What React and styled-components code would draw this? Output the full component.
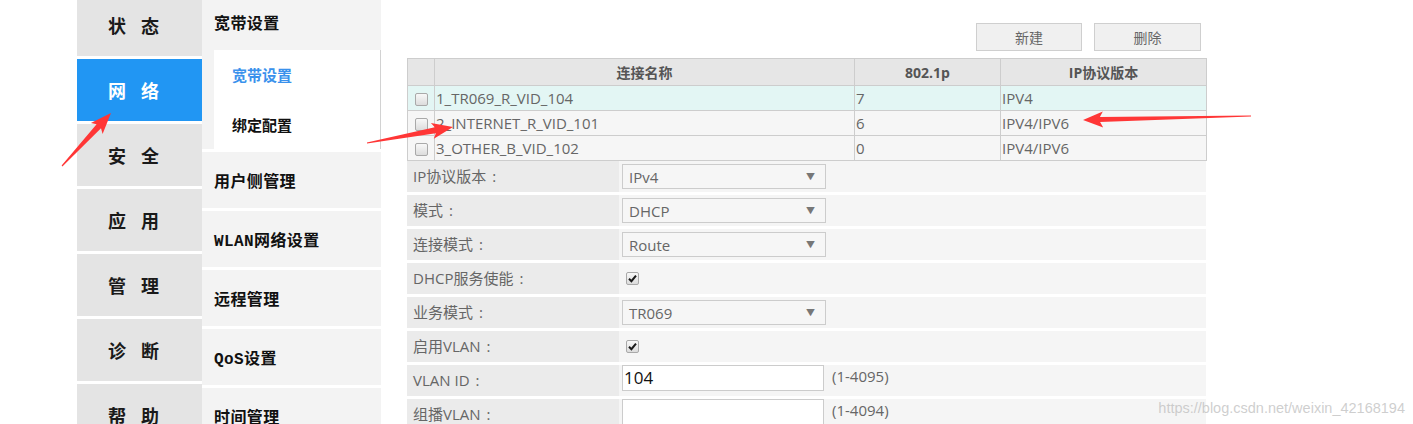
import React from "react";
import styled, { createGlobalStyle } from "styled-components";

const Global = createGlobalStyle`
  html, body { margin: 0; padding: 0; overflow: hidden; background: #fff; }
  body { font-family: "Open Sans", "Noto Sans CJK SC", sans-serif; }
`;

const Root = styled.div`
  position: relative;
  width: 1413px;
  height: 424px;
  overflow: hidden;
`;

const Page = styled.div`
  display: flex;
  align-items: flex-start;
  margin-top: -6px;
  padding-left: 77px;
`;

const NavCol = styled.nav`
  width: 125px;
  display: flex;
  flex-direction: column;
  gap: 3px;
`;

const NavItem = styled.div`
  height: 62px;
  display: flex;
  align-items: center;
  padding-left: 31px;
  background: ${(p) => (p.$active ? "#2196f3" : "#e4e4e4")};
  color: ${(p) => (p.$active ? "#fff" : "#1a1a1a")};
  font-family: "Liberation Serif", "Noto Sans CJK SC", serif;
  font-size: 18px;
  font-weight: 700;
  letter-spacing: 15px;
`;

const SubCol = styled.div`
  width: 179px;
  display: flex;
  flex-direction: column;
  gap: 3px;
`;

const Group = styled.div`
  display: flex;
  flex-direction: column;
`;

const GroupHeader = styled.div`
  height: 56px;
  display: flex;
  align-items: center;
  padding-left: 12px;
  background: #f3f3f3;
  color: #111;
  font-family: "Liberation Mono", "Noto Sans CJK SC", monospace;
  font-size: 16px;
  font-weight: 700;
  letter-spacing: 0.4px;
`;

const SubMenuWrap = styled.div`
  height: 99px;
  padding-left: 12px;
  background: #f3f3f3;
  display: flex;
`;

const SubMenu = styled.div`
  flex: 1;
  background: #fff;
  border-right: 1px solid #d2d2d2;
  display: flex;
  flex-direction: column;
`;

const SubItem = styled.div`
  height: 50px;
  display: flex;
  align-items: center;
  padding-left: 18px;
  font-family: "Noto Sans CJK SC", sans-serif;
  font-size: 15px;
  font-weight: 700;
  color: ${(p) => (p.$active ? "#3a91ec" : "#111")};
`;

const Main = styled.main`
  width: 799px;
  margin-left: 26px;
  display: flex;
  flex-direction: column;
`;

const Toolbar = styled.div`
  display: flex;
  justify-content: flex-end;
  gap: 12px;
  padding-top: 29px;
  padding-right: 5px;
`;

const Button = styled.button`
  width: ${(p) => p.$w}px;
  height: 28px;
  background: #f0f0f0;
  border: 1px solid #cfcfcf;
  color: #666;
  font-family: "Noto Sans CJK SC", sans-serif;
  font-size: 14px;
  padding: 0;
`;

const Table = styled.table`
  margin-top: 7px;
  width: 799px;
  border-collapse: collapse;
  table-layout: fixed;
  font-size: 15px;
  color: #666;
`;

const Th = styled.th`
  height: 26px;
  padding: 0;
  border: 1px solid #cdcdcd;
  background: #e6e6e6;
  color: #555;
  font-size: 14px;
  font-weight: 700;
  text-align: center;
`;

const Tr = styled.tr`
  background: ${(p) => (p.$hl ? "#e3f6f4" : "#f6f6f6")};
`;

const Td = styled.td`
  height: 24px;
  padding: 0 0 0 1px;
  border: 1px solid #cdcdcd;
  text-align: left;
  white-space: nowrap;
  line-height: 24px;
`;

const CheckCell = styled(Td)`
  padding: 0;
  text-align: center;
`;

const Box = styled.span`
  display: inline-flex;
  align-items: center;
  justify-content: center;
  box-sizing: border-box;
  width: 13px;
  height: 13px;
  border: 1px solid #a9a9a9;
  border-radius: 2px;
  background: linear-gradient(#f8f8f8, #dcdcdc);
  vertical-align: middle;
`;

const FormList = styled.div`
  margin-top: 0;
  display: flex;
  flex-direction: column;
  gap: 3px;
`;

const FormRow = styled.div`
  display: grid;
  grid-template-columns: 212px 1fr;
  height: 31px;
`;

const Label = styled.div`
  background: #ebebeb;
  display: flex;
  align-items: center;
  padding-left: 6px;
  padding-bottom: 2px;
  color: #666;
  font-size: 15px;
`;

const Colon = styled.span`
  margin-left: 6px;
`;

const Value = styled.div`
  background: #f5f5f5;
  display: flex;
  align-items: ${(p) => (p.$top ? "flex-start" : "center")};
  padding-left: 3px;
  gap: 8px;
`;

const Select = styled.div`
  box-sizing: border-box;
  width: 204px;
  height: 25px;
  border: 1px solid #cccccc;
  background: #f6f6f6;
  display: flex;
  align-items: center;
  justify-content: space-between;
  padding: 0 10px 0 6px;
  color: #666;
  font-size: 15px;
`;

const Arrow = styled.span`
  font-size: 9px;
  color: #777;
`;

const CheckWrap = styled.span`
  padding-left: 4px;
  display: flex;
`;

const Input = styled.div`
  box-sizing: border-box;
  width: 202px;
  height: 26px;
  border: 1px solid #cccccc;
  background: #fff;
  color: #111;
  font-size: 17px;
  line-height: 24px;
  padding-left: 1px;
`;

const Hint = styled.span`
  color: #666;
  font-size: 15px;
  margin-top: 1px;
`;

const Overlay = styled.svg`
  position: absolute;
  left: 0;
  top: 0;
  pointer-events: none;
`;

const Watermark = styled.div`
  position: absolute;
  right: 8px;
  bottom: 8px;
  font-family: "Liberation Sans", sans-serif;
  font-size: 14.5px;
  color: rgba(190, 190, 190, 0.75);
`;

function arrowPoints([tx, ty], [hx, hy], headLen = 18, headHalf = 8, neck = 3) {
  const dx = hx - tx;
  const dy = hy - ty;
  const len = Math.hypot(dx, dy);
  const ux = dx / len;
  const uy = dy / len;
  const nx = -uy;
  const ny = ux;
  const bx = hx - ux * headLen;
  const by = hy - uy * headLen;
  const pts = [
    [tx + nx * 0.6, ty + ny * 0.6],
    [bx + nx * neck, by + ny * neck],
    [bx - ux * 3 + nx * headHalf, by - uy * 3 + ny * headHalf],
    [hx, hy],
    [bx - ux * 3 - nx * headHalf, by - uy * 3 - ny * headHalf],
    [bx - nx * neck, by - ny * neck],
    [tx - nx * 0.6, ty - ny * 0.6],
  ];
  return pts.map((p) => p.map((v) => v.toFixed(1)).join(",")).join(" ");
}

const CheckBox = ({ checked }) => (
  <Box>
    {checked && (
      <svg width="9" height="9" viewBox="0 0 9 9">
        <path d="M1 4.8 L3.4 7.2 L8 1.6" fill="none" stroke="#1a1a1a" strokeWidth="2" />
      </svg>
    )}
  </Box>
);

const navItems = ["状态", "网络", "安全", "应用", "管理", "诊断", "帮助"];
const groups = ["用户侧管理", "WLAN网络设置", "远程管理", "QoS设置", "时间管理"];
const rows = [
  { name: "1_TR069_R_VID_104", p: "7", ip: "IPV4", hl: true },
  { name: "2_INTERNET_R_VID_101", p: "6", ip: "IPV4/IPV6" },
  { name: "3_OTHER_B_VID_102", p: "0", ip: "IPV4/IPV6" },
];

const FieldLabel = ({ children }) => (
  <Label>
    {children}
    <Colon>:</Colon>
  </Label>
);

export default function App() {
  return (
    <Root>
      <Global />
      <Page>
        <NavCol>
          {navItems.map((n, i) => (
            <NavItem key={n} $active={i === 1}>
              {n}
            </NavItem>
          ))}
        </NavCol>
        <SubCol>
          <Group>
            <GroupHeader>宽带设置</GroupHeader>
            <SubMenuWrap>
              <SubMenu>
                <SubItem $active>宽带设置</SubItem>
                <SubItem>绑定配置</SubItem>
              </SubMenu>
            </SubMenuWrap>
          </Group>
          {groups.map((g) => (
            <GroupHeader key={g}>{g}</GroupHeader>
          ))}
        </SubCol>
        <Main>
          <Toolbar>
            <Button $w={106}>新建</Button>
            <Button $w={107}>删除</Button>
          </Toolbar>
          <Table>
            <colgroup>
              <col style={{ width: 27 }} />
              <col style={{ width: 420 }} />
              <col style={{ width: 146 }} />
              <col style={{ width: 206 }} />
            </colgroup>
            <thead>
              <tr>
                <Th />
                <Th>连接名称</Th>
                <Th>802.1p</Th>
                <Th>IP协议版本</Th>
              </tr>
            </thead>
            <tbody>
              {rows.map((r) => (
                <Tr key={r.name} $hl={r.hl}>
                  <CheckCell>
                    <CheckBox />
                  </CheckCell>
                  <Td>{r.name}</Td>
                  <Td>{r.p}</Td>
                  <Td>{r.ip}</Td>
                </Tr>
              ))}
            </tbody>
          </Table>
          <FormList>
            <FormRow>
              <FieldLabel>IP协议版本</FieldLabel>
              <Value>
                <Select>
                  IPv4<Arrow>▼</Arrow>
                </Select>
              </Value>
            </FormRow>
            <FormRow>
              <FieldLabel>模式</FieldLabel>
              <Value>
                <Select>
                  DHCP<Arrow>▼</Arrow>
                </Select>
              </Value>
            </FormRow>
            <FormRow>
              <FieldLabel>连接模式</FieldLabel>
              <Value>
                <Select>
                  Route<Arrow>▼</Arrow>
                </Select>
              </Value>
            </FormRow>
            <FormRow>
              <FieldLabel>DHCP服务使能</FieldLabel>
              <Value>
                <CheckWrap>
                  <CheckBox checked />
                </CheckWrap>
              </Value>
            </FormRow>
            <FormRow>
              <FieldLabel>业务模式</FieldLabel>
              <Value>
                <Select>
                  TR069<Arrow>▼</Arrow>
                </Select>
              </Value>
            </FormRow>
            <FormRow>
              <FieldLabel>启用VLAN</FieldLabel>
              <Value>
                <CheckWrap>
                  <CheckBox checked />
                </CheckWrap>
              </Value>
            </FormRow>
            <FormRow>
              <FieldLabel>VLAN ID</FieldLabel>
              <Value $top>
                <Input>104</Input>
                <Hint>(1-4095)</Hint>
              </Value>
            </FormRow>
            <FormRow>
              <FieldLabel>组播VLAN</FieldLabel>
              <Value $top>
                <Input />
                <Hint>(1-4094)</Hint>
              </Value>
            </FormRow>
          </FormList>
        </Main>
      </Page>
      <Overlay width="1413" height="424" viewBox="0 0 1413 424">
        <polygon points={arrowPoints([62, 166], [111, 113])} fill="#ff3636" />
        <polygon points={arrowPoints([367, 143], [453, 127])} fill="#ff3636" />
        <polygon points={arrowPoints([1251, 116], [1083, 120], 17, 8, 2.5)} fill="#ff3636" />
      </Overlay>
      <Watermark>https://blog.csdn.net/weixin_42168194</Watermark>
    </Root>
  );
}
